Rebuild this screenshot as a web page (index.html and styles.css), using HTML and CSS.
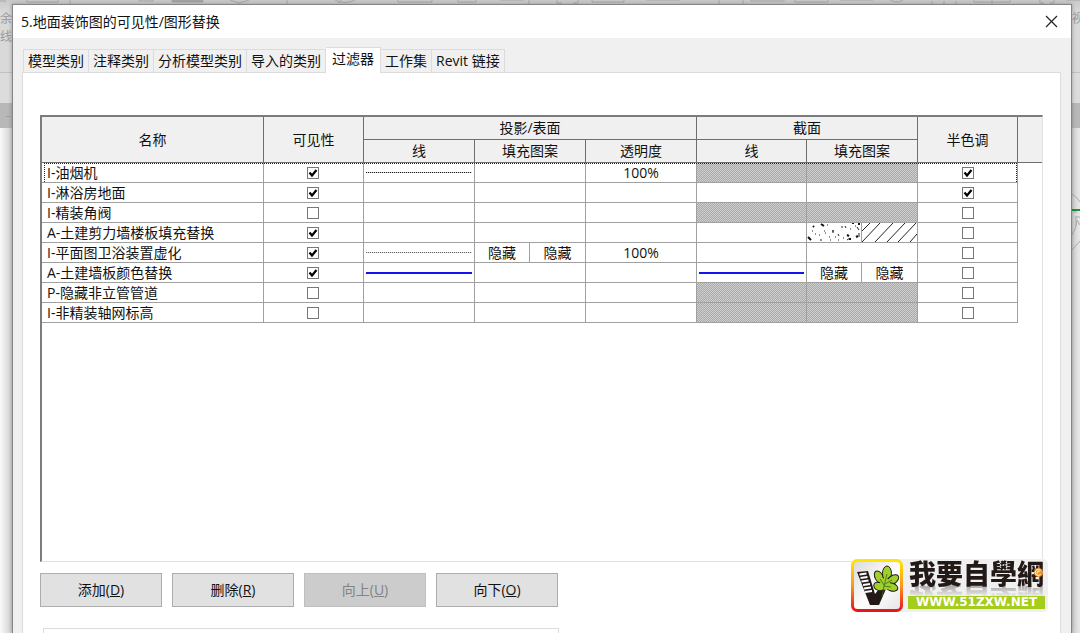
FILE: index.html
```html
<!DOCTYPE html>
<html lang="zh-CN">
<head>
<meta charset="utf-8">
<meta name="viewport" content="width=device-width, initial-scale=1">
<title>可见性/图形替换</title>
<link rel="stylesheet" href="styles.css">
</head>
<body>
<div class="backdrop">
  <svg class="ribbon" width="1080" height="4" viewBox="0 0 1080 4" fill="none" stroke="#a9a9a9">
    <path d="M0 1h6M27 0v2h31V0M70 0v4M139 0v1h14V0M230 0l9 3 10-3M287 0v4M335 0q10 5 20 0M341 0l-3 3M398 0v2h34V0M458 0v2h18V0M500 0h24M529 0v4M557 0v3h5M573 3h5V0M592 0v2h32V0M646 0h34M719 0v4M743 0v4M751 0v1h33V0M795 0v2h33V0M840 0h33M890 0q7 4 13 0M932 1v3M944 1v3M956 1v3M974 0v2h36V0M992 0v4M1040 0v3h4M1050 3h4V0M1066 0h14"/>
    <path d="M172 0v2h31V0z" fill="#9c9c9c"/>
  </svg>
  <div class="band"></div>
  <span class="ghost ghost-a">余</span>
  <span class="ghost ghost-b">线</span>
  <span class="ghost ghost-c">视</span>
  <span class="ghost ghost-d">-</span>
  <svg class="sketch" width="8" height="60" viewBox="0 0 8 60" fill="none" stroke="#aaa">
    <path d="M0 1q6 4 8 8M0 42q4-6 5-14M0 57l8-9M3 24h6M4 24v9M5 27l3 5M1 20q3-4 3 0"/>
    <path d="M0 17h8" stroke="#1f9136" stroke-width="2"/>
  </svg>
</div>

<main class="dialog">
  <header class="titlebar">
    <h1>5.地面装饰图的可见性/图形替换</h1>
    <button class="close" type="button" aria-label="关闭">
      <svg width="13" height="13" viewBox="0 0 13 13"><path d="M1 1l11 11M12 1L1 12" fill="none" stroke="#222" stroke-width="1.2"/></svg>
    </button>
  </header>

  <nav class="tabs" role="tablist">
    <button class="tab" type="button" role="tab">模型类别</button>
    <button class="tab" type="button" role="tab">注释类别</button>
    <button class="tab" type="button" role="tab">分析模型类别</button>
    <button class="tab" type="button" role="tab">导入的类别</button>
    <button class="tab active" type="button" role="tab" aria-selected="true">过滤器</button>
    <button class="tab" type="button" role="tab">工作集</button>
    <button class="tab" type="button" role="tab">Revit 链接</button>
  </nav>

  <section class="panel">
    <div class="grid">
      <table class="filters">
        <colgroup>
          <col><col class="w-visible"><col class="w-line"><col class="w-line"><col class="w-line"><col class="w-cut"><col class="w-line"><col class="w-half"><col class="w-rest">
        </colgroup>
        <thead>
          <tr>
            <th rowspan="2">名称</th>
            <th rowspan="2">可见性</th>
            <th colspan="3">投影/表面</th>
            <th colspan="2">截面</th>
            <th rowspan="2">半色调</th>
            <td class="rest" rowspan="2"></td>
          </tr>
          <tr><th>线</th><th>填充图案</th><th>透明度</th><th>线</th><th>填充图案</th></tr>
        </thead>
        <tbody>
          <tr class="focused">
            <td class="name">I-油烟机</td>
            <td><input type="checkbox" aria-label="I-油烟机 可见性" checked></td>
            <td><span class="line dotted"></span></td><td></td><td>100%</td>
            <td class="off"></td><td class="off"></td>
            <td><input type="checkbox" aria-label="I-油烟机 半色调" checked></td><td class="rest"></td>
          </tr>
          <tr>
            <td class="name">I-淋浴房地面</td>
            <td><input type="checkbox" aria-label="I-淋浴房地面 可见性" checked></td>
            <td></td><td></td><td></td><td></td><td></td>
            <td><input type="checkbox" aria-label="I-淋浴房地面 半色调" checked></td><td class="rest"></td>
          </tr>
          <tr>
            <td class="name">I-精装角阀</td>
            <td><input type="checkbox" aria-label="I-精装角阀 可见性"></td>
            <td></td><td></td><td></td><td class="off"></td><td class="off"></td>
            <td><input type="checkbox" aria-label="I-精装角阀 半色调"></td><td class="rest"></td>
          </tr>
          <tr>
            <td class="name">A-土建剪力墙楼板填充替换</td>
            <td><input type="checkbox" aria-label="A-土建剪力墙楼板填充替换 可见性" checked></td>
            <td></td><td></td><td></td><td></td>
            <td>
              <div class="split">
                <svg viewBox="0 0 54 19" preserveAspectRatio="none">
                  <path d="M1 14l3 3M14 1l3 2M6 3l1 1M49 14l2-1M52 0v2M45 0h2M42 16h2M40 12l2 1" stroke="#111" stroke-width="2"/>
                  <path d="M8 11h1M12 12h1M13 17h2M18 10h1M17 8h1M22 14h1M23 17h1M25 8h2M26 7v3M34 4h2M31 11l1 2M31 17h1M38 3l1 2M43 6h1M50 4l2 3M52 10v4M40 17l3-2M5 8h1M48 3h1M28 14h1M36 15h1M20 2h1" stroke="#222"/>
                </svg>
                <svg viewBox="0 0 55 19" preserveAspectRatio="none">
                  <path d="M0 8l8-8M0 19L18 0M13 19L31 0M25 19L43 0M36 19L54 0M48 19l7-8" stroke="#222" fill="none"/>
                </svg>
              </div>
            </td>
            <td><input type="checkbox" aria-label="A-土建剪力墙楼板填充替换 半色调"></td><td class="rest"></td>
          </tr>
          <tr>
            <td class="name">I-平面图卫浴装置虚化</td>
            <td><input type="checkbox" aria-label="I-平面图卫浴装置虚化 可见性" checked></td>
            <td><span class="line dotted faint"></span></td>
            <td><div class="split"><span>隐藏</span><span>隐藏</span></div></td>
            <td>100%</td><td></td><td></td>
            <td><input type="checkbox" aria-label="I-平面图卫浴装置虚化 半色调"></td><td class="rest"></td>
          </tr>
          <tr>
            <td class="name">A-土建墙板颜色替换</td>
            <td><input type="checkbox" aria-label="A-土建墙板颜色替换 可见性" checked></td>
            <td><span class="line blue"></span></td><td></td><td></td>
            <td><span class="line blue"></span></td>
            <td><div class="split"><span>隐藏</span><span>隐藏</span></div></td>
            <td><input type="checkbox" aria-label="A-土建墙板颜色替换 半色调"></td><td class="rest"></td>
          </tr>
          <tr>
            <td class="name">P-隐藏非立管管道</td>
            <td><input type="checkbox" aria-label="P-隐藏非立管管道 可见性"></td>
            <td></td><td></td><td></td><td class="off"></td><td class="off"></td>
            <td><input type="checkbox" aria-label="P-隐藏非立管管道 半色调"></td><td class="rest"></td>
          </tr>
          <tr>
            <td class="name">I-非精装轴网标高</td>
            <td><input type="checkbox" aria-label="I-非精装轴网标高 可见性"></td>
            <td></td><td></td><td></td><td class="off"></td><td class="off"></td>
            <td><input type="checkbox" aria-label="I-非精装轴网标高 半色调"></td><td class="rest"></td>
          </tr>
        </tbody>
      </table>
    </div>

    <div class="actions">
      <button type="button">添加(<u>D</u>)</button>
      <button type="button">删除(<u>R</u>)</button>
      <button type="button" disabled>向上(<u>U</u>)</button>
      <button type="button">向下(<u>O</u>)</button>
    </div>
    <div class="group"></div>
  </section>
</main>

<aside class="watermark">
  <svg class="mark" width="53" height="53" viewBox="0 0 53 53">
    <defs>
      <linearGradient id="frame" x1="0" y1="0" x2="0" y2="1"><stop offset="0" stop-color="#ffe600"/><stop offset=".5" stop-color="#f79a1c"/><stop offset="1" stop-color="#e8141c"/></linearGradient>
      <linearGradient id="face" x1="0" y1="0" x2="1" y2="1"><stop offset="0" stop-color="#d9d9d9"/><stop offset=".55" stop-color="#fff"/><stop offset="1" stop-color="#e4e4e4"/></linearGradient>
    </defs>
    <rect x="1.5" y="1.5" width="49" height="50" rx="5" fill="url(#face)" stroke="url(#frame)" stroke-width="3"/>
    <path d="M6 13l11-1 7 23 4-5h7l-7 16h-9z" fill="#231a18"/>
    <path d="M8.500 15.500l7-1M9.500 19l7-1M10.500 22.500l7-1M12 26l7-1M13 29.500l7-1M14 33l7-1" stroke="#fff" stroke-width="2"/>
    <g fill="#9fd02c" stroke="#231a18">
      <ellipse cx="28" cy="18" rx="4" ry="6.500" transform="rotate(-28 28 18)"/>
      <ellipse cx="36" cy="14.500" rx="4.500" ry="7.500"/>
      <ellipse cx="41.500" cy="21" rx="4" ry="7" transform="rotate(55 41.500 21)"/>
      <ellipse cx="40.500" cy="28" rx="4" ry="6.500" transform="rotate(108 40.500 28)"/>
      <ellipse cx="28" cy="27.500" rx="4" ry="5.500" transform="rotate(-65 28 27.500)"/>
    </g>
    <ellipse cx="34" cy="25" rx="5" ry="6" fill="#9fd02c"/>
    <path d="M31 38l2-11 3-12M34 25l7-4M33 27l7 1M33 26l-4-6" stroke="#3b6715" stroke-width=".8" fill="none"/>
  </svg>
  <div class="brand">
    <strong>我要自學網</strong>
    <svg class="swirl" width="9" height="9" viewBox="0 0 9 9"><circle cx="4.500" cy="4.500" r="4.500" fill="#f7941d"/><path d="M6.500 6.500a3 3 0 1 1 0-4M4 5.500a1.200 1.200 0 1 1 1.500-1.500" fill="none" stroke="#fff"/></svg>
    <span class="url">WWW.51ZXW.NET</span>
  </div>
</aside>
</body>
</html>
```
FILE: styles.css
```css
* { box-sizing: border-box; }

body {
  margin: 0;
  min-height: 100vh;
  position: relative;
  overflow: hidden;
  font: 14px/18px "Open Sans", "Noto Sans CJK SC", sans-serif;
  color: #111;
  background: #e4e4e4;
}

button { font: inherit; color: inherit; padding: 0; }
h1 { margin: 0; font-size: 14px; font-weight: 400; }

/* Application window behind the dialog */
.backdrop {
  position: absolute;
  inset: 0;
  overflow: hidden;
  background: linear-gradient(90deg, #fafafa 0, #d0d0d0 12px, #cfcfcf calc(100% - 8px), #e8e8e8 100%);
}
.backdrop::before {
  content: "";
  position: absolute;
  inset: 0 0 auto;
  height: 103px;
  background: linear-gradient(#c9c9c9 0, #d9d9d9 12px, #d9d9d9 72px, #c2c2c2 72px, #c2c2c2 73px, #dcdcdc 73px);
}
.band { position: absolute; top: 103px; left: 0; right: 0; height: 25px; background: #b8b8b8; }
.ribbon { position: absolute; top: 0; left: 0; }
.sketch { position: absolute; top: 193px; right: 0; }
.ghost { position: absolute; color: #999; font-size: 12px; white-space: nowrap; }
.ghost-a { left: 0; top: 10px; }
.ghost-b { left: 0; top: 28px; }
.ghost-c { right: -4px; top: 10px; }
.ghost-d { left: 6px; top: 107px; }

.dialog {
  position: relative;
  display: flex;
  flex-direction: column;
  min-height: calc(100vh - 4px);
  margin: 4px 8px 0 12px;
  border: 1px solid #858585;
  border-bottom: 0;
  background: #f0f0f0;
  box-shadow: 0 0 4px rgba(0, 0, 0, .3);
}

.titlebar {
  display: flex;
  align-items: center;
  justify-content: space-between;
  height: 33px;
  padding: 0 13px 0 8px;
  background: #fff;
}
.close { display: flex; border: 0; background: none; }

.tabs { position: relative; display: flex; align-items: flex-end; height: 34px; padding-left: 10px; }
.tab {
  height: 23px;
  padding: 0 4px;
  border: 1px solid #dcdcdc;
  border-width: 1px 1px 0 0;
  background: #f0f0f0;
}
.tab:first-child { border-left-width: 1px; }
.tab.active { height: 26px; margin-bottom: -1px; padding: 0 6px 3px; background: #fff; }

.panel {
  flex: 1;
  display: flex;
  flex-direction: column;
  margin: 0 10px 0 9px;
  padding: 42px 17px 0;
  border: 1px solid #dcdcdc;
  border-bottom: 0;
  background: #fff;
}

.grid {
  flex: 1;
  border: 1px solid #e3e3e3;
  border-top: 2px solid #7c7c7c;
  border-left: 2px solid #7c7c7c;
}
.filters { width: 100%; table-layout: fixed; border-collapse: separate; border-spacing: 0; }
.w-visible { width: 100px; }
.w-line { width: 111px; }
.w-cut { width: 110px; }
.w-half { width: 100px; }
.w-rest { width: 24px; }

.filters th, .filters td {
  padding: 0;
  border: 1px solid #a0a0a0;
  border-width: 0 1px 1px 0;
  text-align: center;
  vertical-align: middle;
  font-weight: 400;
}
.filters thead th, .filters thead td { height: 23px; background: #f0f0f0; border-color: #6e6e6e; }
.filters tbody td { height: 20px; }
.filters .rest { border-right: 0; }
.filters tbody .rest { border: 0; }
.filters .name { padding-left: 5px; text-align: left; white-space: nowrap; }
.filters .off { background: repeating-conic-gradient(#aaa 0 25%, #cecece 0 50%) 0 0 / 2px 2px; }

.focused { position: relative; }
.focused .name::after {
  content: "";
  position: absolute;
  inset: 0 25px 1px 2px;
  border: 1px dotted #222;
  border-bottom: 0;
  pointer-events: none;
}

.filters input {
  display: block;
  appearance: none;
  width: 12px;
  height: 12px;
  margin: 0 auto;
  border: 1px solid #777;
  background: #fff;
}
.filters input:checked {
  background: #fff url("data:image/svg+xml,%3Csvg xmlns='http://www.w3.org/2000/svg' viewBox='0 0 10 10'%3E%3Cpath d='M1.500 4.500l2.500 3 4.500-5.500' fill='none' stroke='%23000' stroke-width='2.200'/%3E%3C/svg%3E") center / 10px 10px;
}

.line { display: block; margin: 0 2px; }
.dotted { height: 1px; background: repeating-linear-gradient(90deg, #222 0 1px, #ccc 1px 2px); }
.faint { opacity: .7; }
.blue { height: 2px; background: #1414f0; }

.split { display: grid; grid-template-columns: 1fr 1fr; height: 19px; line-height: 19px; }
.split > * { width: 100%; height: 19px; min-width: 0; }
.split > :first-child { border-right: 1px solid #a0a0a0; }

.actions { display: flex; gap: 10px; margin-top: 11px; }
.actions button { width: 122px; height: 34px; border: 1px solid #adadad; background: #e1e1e1; }
.actions button:disabled { border-color: #bfbfbf; background: #ccc; color: #838383; }

.group {
  width: 516px;
  height: 5px;
  margin: 21px 0 0 3px;
  border: 1px solid #dcdcdc;
  border-bottom: 0;
}

/* Site badge laid over the dialog corner */
.watermark {
  position: absolute;
  right: 32px;
  bottom: 21px;
  display: flex;
  border-radius: 5px;
  background: #f0f0f0;
}
.brand {
  position: relative;
  display: flex;
  flex-direction: column;
  justify-content: space-between;
  padding: 1px 3px 3px 4px;
}
.brand strong {
  padding: 0 1px;
  font: 900 27px/26px "Noto Sans CJK TC", sans-serif;
  color: #231a18;
  -webkit-box-reflect: below -2px linear-gradient(transparent 50%, rgba(0, 0, 0, .4));
}
.swirl { position: absolute; right: 5px; top: 9px; }
.url {
  position: relative;
  height: 13px;
  background: #a5cd1b;
  color: #fff;
  font: 700 12px/13px "DejaVu Sans", sans-serif;
  text-align: center;
}
```
